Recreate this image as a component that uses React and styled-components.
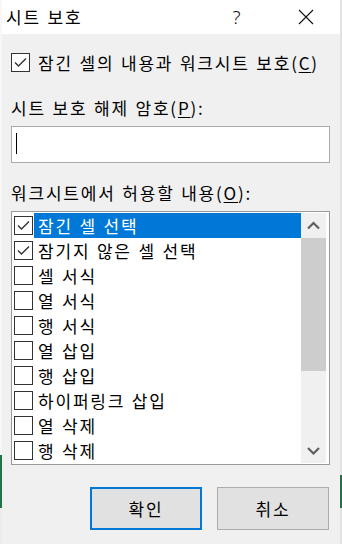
import React from 'react'
import styled, { createGlobalStyle } from 'styled-components'

const Global = createGlobalStyle`
  html, body {
    margin: 0;
    padding: 0;
    background: #f0f0f0;
  }
  body {
    font-family: "Noto Sans CJK KR", "Noto Sans", sans-serif;
    color: #000;
    letter-spacing: 1.8px;
    word-spacing: 1px;
  }
`

const Screen = styled.div`
  width: 342px;
  height: 544px;
  display: flex;
  overflow: hidden;
`

const Edge = styled.div`
  width: 2px;
  flex: none;
  background: ${p => p.$right
    ? 'linear-gradient(#e2e2e2 0 475px, #217346 475px 508px, #e2e2e2 508px)'
    : 'linear-gradient(#f7f7f7 0 455px, #217346 455px 508px, #ececec 508px)'};
`

const Dialog = styled.div`
  flex: 1;
  display: flex;
  flex-direction: column;
  background: #f0f0f0;
`

const TitleBar = styled.div`
  height: 34px;
  background: #fff;
  display: flex;
  align-items: center;
  flex: none;
`

const Title = styled.div`
  flex: 1;
  padding-left: 4px;
  font-size: 17px;
  line-height: 22px;
`

const TitleButton = styled.div`
  width: 69px;
  height: 34px;
  display: flex;
  align-items: center;
  justify-content: center;
  font-family: "Noto Sans", "DejaVu Sans", sans-serif;
  font-weight: 300;
  font-size: 19px;
  letter-spacing: 0;
  color: #111;
`

const Body = styled.div`
  display: flex;
  flex-direction: column;
  padding: 19px 10px 0 9px;
`

const CheckRow = styled.label`
  display: flex;
  align-items: center;
  gap: 8px;
  height: 19px;
  font-size: 17px;
`

const Box = styled.span`
  width: 19px;
  height: 19px;
  box-sizing: border-box;
  border: 1px solid #333;
  background: #fff;
  flex: none;
  display: flex;
  align-items: center;
  justify-content: center;
`

const Caption = styled.div`
  font-size: 17px;
  line-height: 22px;
  margin-top: ${p => p.$top}px;
`

const Key = styled.span`
  text-decoration: underline;
  text-underline-offset: 2px;
`

const Input = styled.div`
  margin-top: 7px;
  height: 37px;
  box-sizing: border-box;
  border: 1px solid #ababab;
  background: #fff;
  padding: 6px 4px;
`

const Caret = styled.div`
  width: 1px;
  height: 21px;
  background: #000;
`

const List = styled.div`
  margin-top: 7px;
  height: 254px;
  box-sizing: border-box;
  border: 1px solid #9a9a9a;
  background: #fff;
  padding: 1px;
  display: flex;
`

const Items = styled.div`
  flex: 1;
  display: flex;
  flex-direction: column;
`

const Item = styled.div`
  height: 25px;
  display: flex;
  align-items: center;
  gap: 1px;
  padding-left: 1px;
  font-size: 17px;
`

const ItemText = styled.span`
  flex: 1;
  height: 25px;
  line-height: 25px;
  padding-left: 4px;
  background: ${p => (p.$selected ? '#0078d7' : 'transparent')};
  color: ${p => (p.$selected ? '#fff' : '#000')};
  white-space: nowrap;
`

const ScrollBar = styled.div`
  width: 25px;
  margin-right: 2px;
  background: #f0f0f0;
  display: flex;
  flex-direction: column;
`

const ScrollArrow = styled.div`
  height: 25px;
  display: flex;
  align-items: center;
  justify-content: center;
`

const Thumb = styled.div`
  height: 133px;
  background: #cdcdcd;
`

const Track = styled.div`
  flex: 1;
`

const Buttons = styled.div`
  margin-top: 22px;
  display: flex;
  justify-content: flex-end;
  gap: 15px;
  padding-right: 1px;
`

const Button = styled.div`
  width: 112px;
  height: 43px;
  box-sizing: border-box;
  background: #e1e1e1;
  border: ${p => (p.$default ? '2px solid #0078d7' : '1px solid #adadad')};
  display: flex;
  align-items: center;
  justify-content: center;
  font-size: 17px;
`

const Check = () => (
  <svg width="17" height="17" viewBox="0 0 17 17">
    <polyline points="3,8.5 6.5,12 14,4.5" fill="none" stroke="#333" strokeWidth="1.4" />
  </svg>
)

const Chevron = ({ down }) => (
  <svg width="13" height="9" viewBox="0 0 13 9">
    <polyline
      points={down ? '1,2 6.5,7.5 12,2' : '1,7.5 6.5,2 12,7.5'}
      fill="none"
      stroke="#606060"
      strokeWidth="2.2"
    />
  </svg>
)

const items = [
  { text: '잠긴 셀 선택', checked: true, selected: true },
  { text: '잠기지 않은 셀 선택', checked: true },
  { text: '셀 서식' },
  { text: '열 서식' },
  { text: '행 서식' },
  { text: '열 삽입' },
  { text: '행 삽입' },
  { text: '하이퍼링크 삽입' },
  { text: '열 삭제' },
  { text: '행 삭제' },
]

export default function App() {
  return (
    <Screen>
      <Global />
      <Edge />
      <Dialog>
        <TitleBar>
          <Title>시트 보호</Title>
          <TitleButton>?</TitleButton>
          <TitleButton>
            <svg width="16" height="16" viewBox="0 0 16 16">
              <path d="M1 1L15 15M15 1L1 15" stroke="#111" strokeWidth="1.1" />
            </svg>
          </TitleButton>
        </TitleBar>
        <Body>
          <CheckRow>
            <Box><Check /></Box>
            <span>잠긴 셀의 내용과 워크시트 보호(<Key>C</Key>)</span>
          </CheckRow>
          <Caption $top={25}>시트 보호 해제 암호(<Key>P</Key>):</Caption>
          <Input><Caret /></Input>
          <Caption $top={19}>워크시트에서 허용할 내용(<Key>O</Key>):</Caption>
          <List>
            <Items>
              {items.map(it => (
                <Item key={it.text}>
                  <Box>{it.checked && <Check />}</Box>
                  <ItemText $selected={it.selected}>{it.text}</ItemText>
                </Item>
              ))}
            </Items>
            <ScrollBar>
              <ScrollArrow><Chevron /></ScrollArrow>
              <Thumb />
              <Track />
              <ScrollArrow><Chevron down /></ScrollArrow>
            </ScrollBar>
          </List>
          <Buttons>
            <Button $default>확인</Button>
            <Button>취소</Button>
          </Buttons>
        </Body>
      </Dialog>
      <Edge $right />
    </Screen>
  )
}
